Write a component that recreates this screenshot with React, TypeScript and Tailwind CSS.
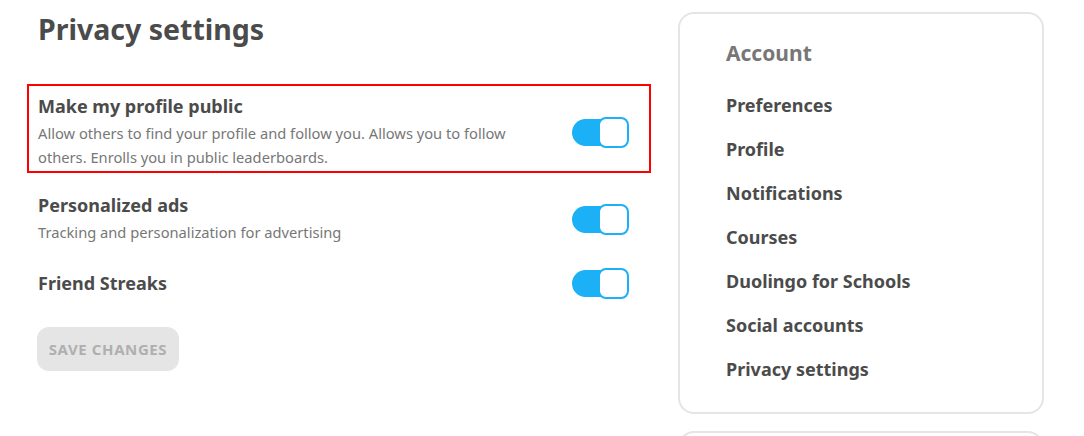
import React from "react";

const FONT = { fontFamily: '"Noto Sans", "Open Sans", Arial, sans-serif' };

function Toggle() {
  return (
    <div className="relative h-[30px] w-[57px] shrink-0">
      <div className="absolute left-0 top-[2px] h-[27px] w-[44px] rounded-full bg-[#1cb0f6]" />
      <div className="absolute right-0 top-0 h-[31px] w-[31px] rounded-[8px] border-2 border-[#1cb0f6] bg-white" />
    </div>
  );
}

function Row({
  title,
  desc,
  highlight,
}: {
  title: string;
  desc?: React.ReactNode;
  highlight?: boolean;
}) {
  return (
    <div
      className={`flex items-center justify-between border-2 pl-[9px] pr-[20px] pt-[8px] pb-[2px] ${
        highlight ? "border-[#ff0000]" : "border-transparent"
      }`}
    >
      <div className="w-[480px]">
        <div className="text-[18px] font-bold leading-[24px] text-[#4b4b4b]">{title}</div>
        {desc && <div className="mt-[3px] text-[14.7px] leading-[24px] text-[#777777]">{desc}</div>}
      </div>
      <Toggle />
    </div>
  );
}

export default function App() {
  const items = [
    "Preferences",
    "Profile",
    "Notifications",
    "Courses",
    "Duolingo for Schools",
    "Social accounts",
    "Privacy settings",
  ];
  return (
    <div className="h-[436px] w-[1084px] overflow-hidden bg-white" style={FONT}>
      <div className="flex gap-[27px] pl-[27px]">
        <div className="w-[624px] shrink-0">
          <h1 className="pl-[11px] pt-[11px] text-[28.5px] font-bold leading-[36px] text-[#4b4b4b]">
            Privacy settings
          </h1>
          <div className="mt-[37px] flex flex-col gap-[10px]">
            <Row
              highlight
              title="Make my profile public"
              desc={
                <>
                  Allow others to find your profile and follow you. Allows you to follow
                  <br />
                  others. Enrolls you in public leaderboards.
                </>
              }
            />
            <Row title="Personalized ads" desc="Tracking and personalization for advertising" />
            <Row title="Friend Streaks" />
          </div>
          <button className="ml-[10px] mt-[25px] flex h-[44px] w-[142px] items-center justify-center rounded-[12px] bg-[#e5e5e5] text-[15px] font-bold uppercase tracking-[0.6px] text-[#afafaf]">
            Save changes
          </button>
        </div>
        <div className="flex w-[366px] shrink-0 flex-col">
          <div className="mt-[12px] h-[402px] rounded-[16px] border-2 border-[#e5e5e5] px-[46px] pt-[24px]">
            <div className="mb-[15px] text-[21px] font-bold leading-[30px] text-[#777777]">Account</div>
            {items.map((it) => (
              <div key={it} className="text-[18px] font-bold leading-[44px] text-[#4b4b4b]">
                {it}
              </div>
            ))}
          </div>
          <div className="mt-[17px] h-[100px] rounded-[16px] border-2 border-[#e5e5e5]" />
        </div>
      </div>
    </div>
  );
}
